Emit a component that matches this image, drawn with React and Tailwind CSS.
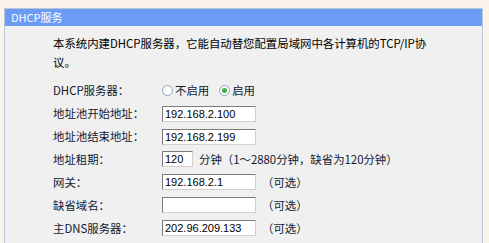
import React from 'react';

const cjk = { fontFamily: '"Noto Sans CJK SC", "Liberation Sans", sans-serif' };
const latin = { fontFamily: '"Liberation Sans", Arial, sans-serif' };

const Field = ({ value, width = 'w-[94px]' }) => (
  <input
    readOnly
    value={value}
    style={latin}
    className={`${width} h-[16px] bg-white border border-t-[#7b7b7b] border-l-[#7b7b7b] border-b-[#d4d0c8] border-r-[#d4d0c8] px-[2px] text-[11px] leading-[14px] text-black outline-none`}
  />
);

const Optional = () => <span className="ml-[6px] text-[#111a33]">（可选）</span>;

const Radio = ({ checked, label }) => (
  <label className="flex items-center gap-[2px] mr-[10px]">
    <span className="w-[11px] h-[11px] rounded-full border border-[#8ba0c0] bg-white flex items-center justify-center">
      {checked && <span className="w-[5px] h-[5px] rounded-full bg-[#3fae3f]" />}
    </span>
    <span>{label}</span>
  </label>
);

const Row = ({ label, children }) => (
  <div className="flex items-center h-[23px]">
    <div className="w-[109px] shrink-0">{label}</div>
    <div className="flex items-center">{children}</div>
  </div>
);

export default function App() {
  return (
    <div style={cjk} className="w-[489px] h-[243px] bg-[#fbf4ea] pl-[4px] pt-[8px] pr-[6px] overflow-hidden text-[11.4px] text-[#111a33]">
      <div className="h-[260px] border border-[#b9c6dc] bg-[#f0f0f0]">
        <div className="h-[17px] bg-[#6b9bf5] text-white text-[11px] leading-[17px] pl-[6px]">DHCP服务</div>
        <div className="pl-[48px] pt-[8px]">
          <p className="leading-[19px] whitespace-nowrap text-black">
            本系统内建DHCP服务器，它能自动替您配置局域网中各计算机的TCP/IP协
            <br />
            议。
          </p>
          <div className="mt-[7px]">
            <Row label="DHCP服务器：">
              <Radio label="不启用" />
              <Radio checked label="启用" />
            </Row>
            <Row label="地址池开始地址：">
              <Field value="192.168.2.100" />
            </Row>
            <Row label="地址池结束地址：">
              <Field value="192.168.2.199" />
            </Row>
            <Row label="地址租期：">
              <Field value="120" width="w-[31px]" />
              <span className="ml-[6px]">分钟（1～2880分钟，缺省为120分钟）</span>
            </Row>
            <Row label="网关：">
              <Field value="192.168.2.1" />
              <Optional />
            </Row>
            <Row label="缺省域名：">
              <Field value="" />
              <Optional />
            </Row>
            <Row label="主DNS服务器：">
              <Field value="202.96.209.133" />
              <Optional />
            </Row>
          </div>
        </div>
      </div>
    </div>
  );
}
